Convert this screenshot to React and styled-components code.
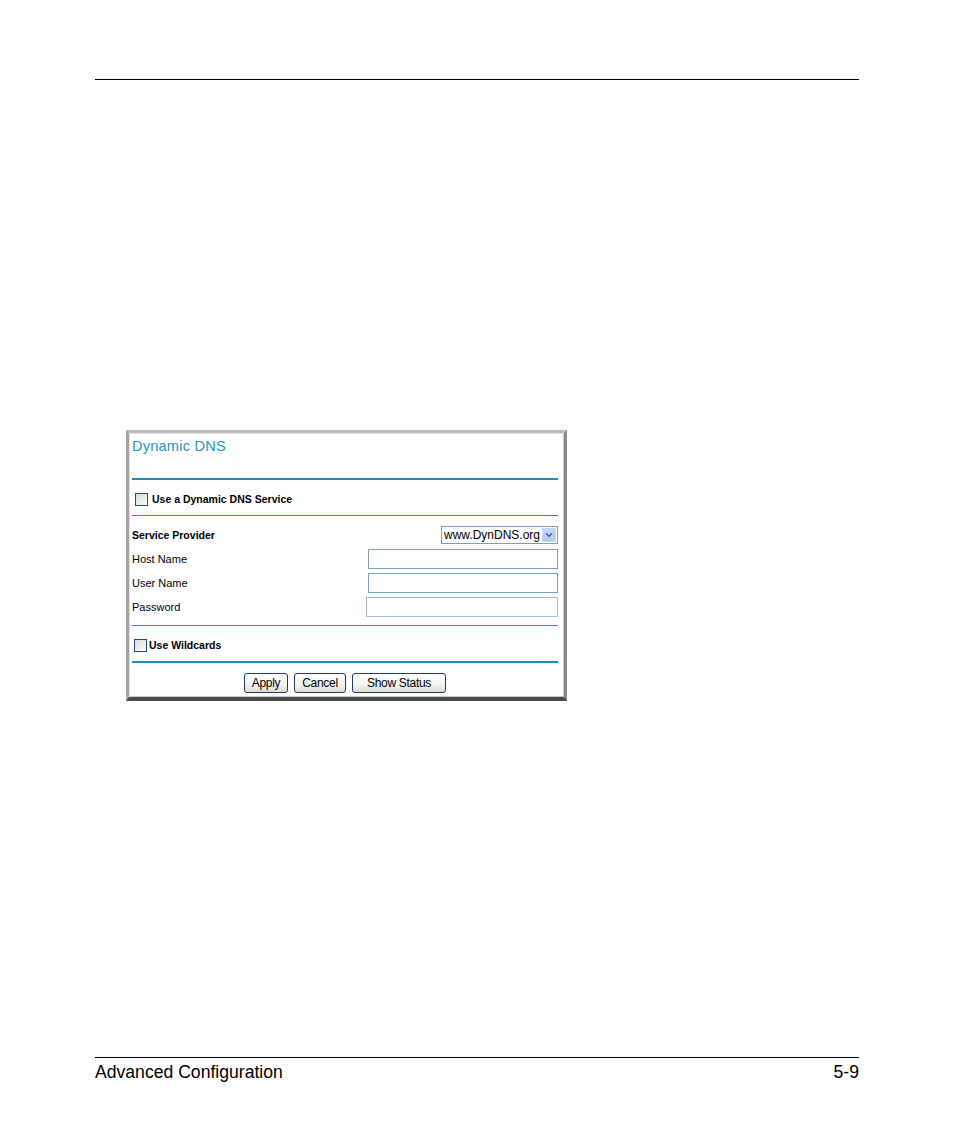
import React from "react";
import styled, { createGlobalStyle } from "styled-components";

const GlobalStyle = createGlobalStyle`
  html, body {
    margin: 0;
    padding: 0;
    background: #ffffff;
  }
  body {
    font-family: "Liberation Sans", Arial, sans-serif;
    color: #000000;
  }
`;

const Page = styled.div`
  width: 954px;
  height: 1145px;
  box-sizing: border-box;
  padding: 79px 95px 0 95px;
  display: flex;
  flex-direction: column;
`;

const Rule = styled.div`
  height: 1px;
  background: #000000;
`;

const Figure = styled.div`
  margin: 350px 0 0 31px;
  width: 441px;
  height: 271px;
  box-sizing: border-box;
  background: #ffffff;
  border-style: solid;
  border-width: 3px 3px 4px 3px;
  border-color: #bdbdbd #8a8a8a #4a4a4a #a4a4a4;
  box-shadow: inset 1px 1px 0 #e2e2e2, inset -1px -1px 0 #c8c8c8;
  padding: 0 6px 0 3px;
  display: flex;
  flex-direction: column;
`;

const Title = styled.div`
  height: 45px;
  box-sizing: border-box;
  padding-top: 5px;
  font-size: 14.6px;
  line-height: 16px;
  color: #2a93c6;
  letter-spacing: 0.2px;
`;

const Divider = styled.div`
  height: ${(p) => (p.thick ? 2 : 1)}px;
  background: #1f8fbf;
`;

const CheckRow = styled.div`
  height: ${(p) => p.h}px;
  box-sizing: border-box;
  padding-top: 3px;
  display: flex;
  align-items: center;
  padding-left: ${(p) => p.indent}px;
  gap: ${(p) => p.gap}px;
  font-size: 10.5px;
  font-weight: bold;
`;

const Box = styled.span`
  width: 11px;
  height: 11px;
  border: 1px solid #1e4f7e;
  background: linear-gradient(135deg, #dcdcd6 0%, #f4f4f0 80%, #ffffff 100%);
  display: inline-block;
`;

const Fields = styled.div`
  padding: 9px 0 8px 0;
  display: flex;
  flex-direction: column;
  gap: 4px;
`;

const FieldRow = styled.div`
  height: 20px;
  display: flex;
  align-items: center;
  justify-content: space-between;
  font-size: ${(p) => (p.bold ? "10.5px" : "11px")};
  font-weight: ${(p) => (p.bold ? "bold" : "normal")};
`;

const SelectBox = styled.div`
  width: 117px;
  height: 18px;
  box-sizing: border-box;
  border: 1px solid #7f9db9;
  display: flex;
  align-items: center;
  justify-content: space-between;
  padding: 0 1px 0 2px;
  font-size: 12px;
  font-weight: normal;
`;

const ArrowBtn = styled.span`
  width: 14px;
  height: 14px;
  background: linear-gradient(180deg, #c6d6f7 0%, #b4c8f2 100%);
  border: 1px solid #c3d3fd;
  box-sizing: border-box;
  display: flex;
  align-items: center;
  justify-content: center;
`;

const TextBox = styled.div`
  width: ${(p) => p.w}px;
  height: 20px;
  box-sizing: border-box;
  border: 1px solid ${(p) => (p.light ? "#a7bccd" : "#7f9db9")};
  background: #ffffff;
`;

const Actions = styled.div`
  flex: 1;
  display: flex;
  justify-content: center;
  align-items: flex-start;
  padding-top: 10px;
  gap: 6px;
`;

const Button = styled.button`
  width: ${(p) => p.w}px;
  height: 20px;
  box-sizing: border-box;
  border: 1px solid #1f3d63;
  border-radius: 3px;
  background: linear-gradient(180deg, #ffffff 0%, #f3f3ef 60%, #dcdcd4 100%);
  font-family: "Liberation Sans", Arial, sans-serif;
  font-size: 12px;
  letter-spacing: -0.3px;
  color: #000000;
  padding: 0;
`;

const Footer = styled.div`
  margin-top: 356px;
`;

const FooterText = styled.div`
  display: flex;
  justify-content: space-between;
  font-size: 17.6px;
  line-height: 20px;
  padding-top: 4px;
`;

const Chevron = () => (
  <svg width="8" height="6" viewBox="0 0 8 6">
    <path d="M1 1.2 L4 4.2 L7 1.2" fill="none" stroke="#4d6185" strokeWidth="1.6" />
  </svg>
);

const fields = [
  { label: "Host Name", w: 190 },
  { label: "User Name", w: 190 },
  { label: "Password", w: 192, light: true },
];

export default function App() {
  return (
    <>
      <GlobalStyle />
      <Page>
        <Rule />
        <Figure>
          <Title>Dynamic DNS</Title>
          <Divider thick />
          <CheckRow h={35} indent={3} gap={4}>
            <Box />
            Use a Dynamic DNS Service
          </CheckRow>
          <Divider />
          <Fields>
            <FieldRow bold>
              Service Provider
              <SelectBox>
                www.DynDNS.org
                <ArrowBtn>
                  <Chevron />
                </ArrowBtn>
              </SelectBox>
            </FieldRow>
            {fields.map((f) => (
              <FieldRow key={f.label}>
                {f.label}
                <TextBox w={f.w} light={f.light} />
              </FieldRow>
            ))}
          </Fields>
          <Divider />
          <CheckRow h={35} indent={2} gap={2}>
            <Box />
            Use Wildcards
          </CheckRow>
          <Divider thick />
          <Actions>
            <Button w={44}>Apply</Button>
            <Button w={52}>Cancel</Button>
            <Button w={94}>Show Status</Button>
          </Actions>
        </Figure>
        <Footer>
          <Rule />
          <FooterText>
            <span>Advanced Configuration</span>
            <span>5-9</span>
          </FooterText>
        </Footer>
      </Page>
    </>
  );
}
